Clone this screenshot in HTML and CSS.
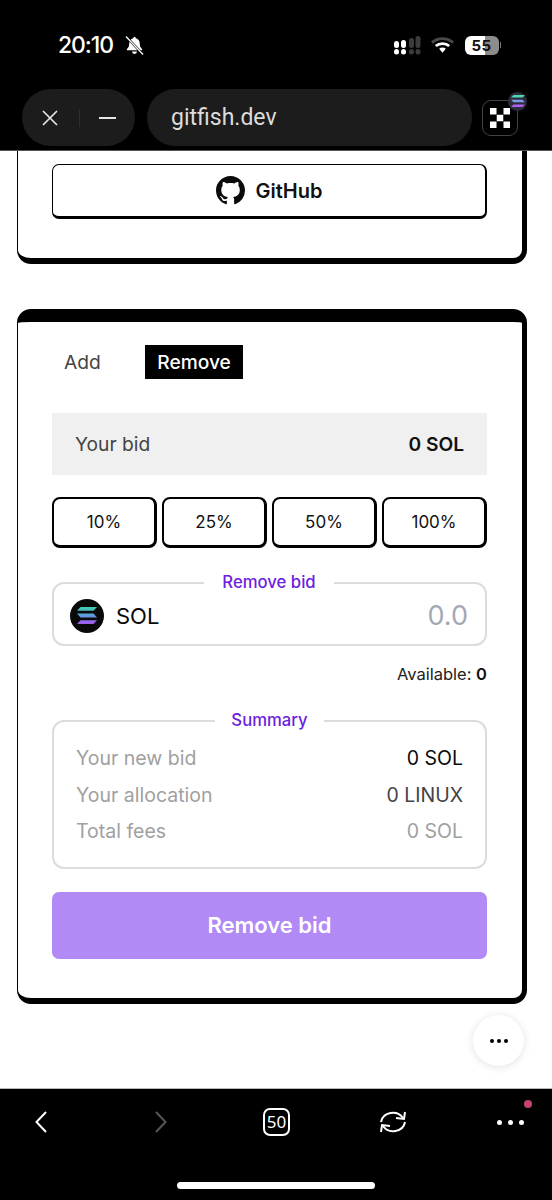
FILE: index.html
```html
<!DOCTYPE html>
<html lang="en">
<head>
<meta charset="utf-8">
<title>gitfish.dev</title>
<link rel="stylesheet" href="styles.css">
</head>
<body>
<div class="screen">
  <header class="chrome">
    <div class="status">
      <div class="status-left">
        <span class="time">20:10</span>
        <svg class="bell" viewBox="0 0 20 20" width="19" height="19"><path fill="#fff" d="M10 1a1.400 1.400 0 0 1 1.400 1.400c2.800.7 4.200 3 4.200 5.800 0 3.100.9 4.200 2.400 5.600v1.200H2v-1.200c1.500-1.400 2.400-2.500 2.400-5.600 0-2.800 1.400-5.100 4.200-5.800A1.400 1.400 0 0 1 10 1z"/><path fill="#fff" d="M7.400 16.400h5.200a2.600 2.600 0 0 1-5.200 0z"/><path stroke="#000" stroke-width="2.600" d="M1 .5l18 19"/><path stroke="#fff" stroke-width="1.300" d="M1 .5l18 19"/></svg>
      </div>
      <div class="status-right">
        <svg class="signal" viewBox="0 0 27 19" width="27" height="19"><g fill="#fff"><rect x="0" y="5" width="5" height="7" rx="2.500"/><rect x="0" y="13" width="5" height="5.500" rx="2.500"/><rect x="7" y="4" width="5" height="8" rx="2.500"/><rect x="7" y="13" width="5" height="5.500" rx="2.500"/></g><g fill="#3c3c3c"><rect x="15" y="2" width="5" height="10" rx="2.500"/><rect x="15" y="13" width="5" height="5.500" rx="2.500"/><rect x="21.500" y="0" width="5" height="12" rx="2.500"/><rect x="21.500" y="13" width="5" height="5.500" rx="2.500"/></g></svg>
        <svg class="wifi" viewBox="0 0 24 18" width="23" height="18"><path fill="none" stroke="#4a4a4a" stroke-width="3" d="M1 6.500C7 1 17 1 23 6.500"/><path fill="none" stroke="#fff" stroke-width="3" d="M5 10c3.700-3.300 10.300-3.300 14 0"/><path fill="#fff" d="M8.500 13c2-1.700 5-1.700 7 0L12 17z"/></svg>
        <span class="battery">55</span><span class="nub"></span>
      </div>
    </div>
    <div class="browser">
      <div class="pill controls">
        <svg viewBox="0 0 16 16" width="16" height="16"><path stroke="#e6e6e6" stroke-width="1.700" d="M1 1l14 14M15 1L1 15"/></svg>
        <span class="divider"></span>
        <span class="minus"></span>
      </div>
      <div class="pill url">gitfish.dev</div>
      <div class="wallet">
        <svg viewBox="0 0 20 20" width="20" height="20"><g fill="#fff"><rect x="0" y="0" width="6.500" height="6.500"/><rect x="13.500" y="0" width="6.500" height="6.500"/><rect x="6.750" y="6.750" width="6.500" height="6.500"/><rect x="0" y="13.500" width="6.500" height="6.500"/><rect x="13.500" y="13.500" width="6.500" height="6.500"/></g></svg>
        <span class="badge">
          <svg viewBox="0 0 14 12" width="14" height="12"><path fill="#4fd6b4" d="M2.500 0H14l-2.500 2.500H0z"/><path fill="#7f9ae8" d="M0 4.700h11.500L14 7.200H2.500z"/><path fill="#b060f0" d="M2.500 9.500H14L11.500 12H0z"/></svg>
        </span>
      </div>
    </div>
  </header>

  <main class="page">
    <section class="card card-top">
      <button class="github">
        <svg viewBox="0 0 16 16" width="29" height="29"><path fill="#0b0b0b" d="M8 0C3.580 0 0 3.580 0 8c0 3.540 2.290 6.530 5.470 7.590.4.070.55-.17.55-.38 0-.19-.01-.82-.01-1.490-2.010.37-2.530-.49-2.690-.94-.09-.23-.48-.94-.82-1.130-.28-.15-.68-.52-.01-.53.63-.01 1.080.58 1.230.82.720 1.210 1.870.87 2.330.66.07-.52.28-.87.51-1.070-1.780-.2-3.640-.89-3.640-3.950 0-.87.31-1.590.82-2.150-.08-.2-.36-1.020.08-2.120 0 0 .67-.21 2.200.82.64-.18 1.320-.27 2-.27.68 0 1.360.09 2 .27 1.530-1.040 2.200-.82 2.200-.82.44 1.100.16 1.920.08 2.120.51.56.82 1.270.82 2.150 0 3.070-1.870 3.750-3.650 3.950.29.25.54.73.54 1.480 0 1.070-.01 1.930-.01 2.200 0 .21.15.46.55.38A8.013 8.013 0 0016 8c0-4.420-3.580-8-8-8z"/></svg>
        <span>GitHub</span>
      </button>
    </section>

    <section class="card card-form">
      <div class="tabs">
        <span class="tab">Add</span>
        <span class="tab active">Remove</span>
      </div>
      <div class="your-bid">
        <span>Your bid</span>
        <strong>0 SOL</strong>
      </div>
      <div class="percents">
        <button class="percent">10%</button>
        <button class="percent">25%</button>
        <button class="percent">50%</button>
        <button class="percent">100%</button>
      </div>
      <fieldset class="group amount">
        <legend class="legend legend-bid">Remove bid</legend>
        <div class="amount-row">
          <span class="sol-logo">
            <svg viewBox="0 0 20 17" width="20" height="17">
              <defs><linearGradient id="solgrad" x1="0" y1="0" x2="0" y2="1"><stop offset="0" stop-color="#3fd0b0"/><stop offset="0.5" stop-color="#5f9be0"/><stop offset="1" stop-color="#a855f0"/></linearGradient></defs>
              <path fill="url(#solgrad)" d="M3.500 0H20l-3.500 3.800H0zM0 6.600h16.500L20 10.400H3.500zM3.500 13.200H20L16.500 17H0z"/>
            </svg>
          </span>
          <span class="sol-name">SOL</span>
          <span class="amount-value">0.0</span>
        </div>
      </fieldset>
      <p class="available">Available: <strong>0</strong></p>
      <fieldset class="group summary">
        <legend class="legend legend-summary">Summary</legend>
        <div class="row"><span>Your new bid</span><span class="v-strong">0 SOL</span></div>
        <div class="row"><span>Your allocation</span><span class="v-mid">0 LINUX</span></div>
        <div class="row"><span>Total fees</span><span>0 SOL</span></div>
      </fieldset>
      <button class="submit">Remove bid</button>
    </section>

    <button class="fab" aria-label="More"><i></i><i></i><i></i></button>
  </main>

  <footer class="toolbar">
    <div class="tools">
      <span class="cell"><svg viewBox="0 0 12 22" width="12" height="22"><path fill="none" stroke="#fff" stroke-width="2" d="M11 1L1.500 11 11 21"/></svg></span>
      <span class="cell cell-forward"><svg viewBox="0 0 12 22" width="12" height="22"><path fill="none" stroke="#555" stroke-width="2" d="M1 1l9.500 10L1 21"/></svg></span>
      <span class="cell cell-count"><span class="tabs-count">50</span></span>
      <span class="cell"><svg viewBox="0 0 28 24" width="28" height="24"><g fill="none" stroke="#fff" stroke-width="2"><path d="M2 12A12 11 0 0 1 24 8"/><path d="M26 2l-1 7-8-1"/><path d="M26 12A12 11 0 0 1 4 16"/><path d="M2 22l1-7 8 1"/></g></svg></span>
      <span class="cell"><span class="more"><i></i><i></i><i></i><b></b></span></span>
    </div>
    <div class="home"></div>
  </footer>
</div>
</body>
</html>
```
FILE: styles.css
```css
* { box-sizing: border-box; }
html, body { margin: 0; padding: 0; background: #fff; }
body { font-family: Inter, "Liberation Sans", sans-serif; color: #000; }
button { font-family: inherit; background: none; cursor: pointer; color: inherit; }

.screen { width: 552px; height: 1200px; display: flex; flex-direction: column; overflow: hidden; }

/* top chrome */
.chrome { height: 151px; flex: none; background: #000; border-bottom: 1px solid #555; padding-top: 33px; }
.status { display: flex; justify-content: space-between; align-items: center; height: 24px; padding: 0 51px 0 58px; }
.status-left { display: flex; align-items: center; gap: 12px; }
.time { font-size: 23px; font-weight: 500; color: #fff; line-height: 24px; letter-spacing: -1.100px; }
.bell { display: block; }
.status-right { display: flex; align-items: center; }
.signal { display: block; margin-right: 10px; }
.wifi { display: block; margin-right: 11px; }
.battery { width: 34px; height: 19px; border-radius: 6px; background: linear-gradient(90deg, #fff 0 58%, #8c8c8c 58% 100%); color: #111; font-size: 15px; font-weight: 700; text-align: center; line-height: 19px; letter-spacing: 0.5px; }
.nub { width: 1.500px; height: 6px; background: #777; margin-left: 1px; }

.browser { display: flex; align-items: center; height: 57px; margin-top: 32px; padding-left: 22px; }
.pill { background: #1c1c1c; height: 57px; border-radius: 29px; display: flex; align-items: center; }
.controls { width: 113px; padding-left: 20px; }
.controls svg { display: block; }
.divider { width: 1px; height: 18px; background: #2e2e2e; margin-left: 21px; }
.minus { width: 17px; height: 2px; background: #e6e6e6; margin-left: 19px; }
.url { width: 325px; margin-left: 12px; padding: 0 0 1px 24px; color: #dcdcdc; font-family: Roboto, sans-serif; font-size: 23px; }
.wallet { position: relative; width: 36px; height: 36px; margin-left: 10px; border: 1px solid #444; border-radius: 9px; display: flex; align-items: center; justify-content: center; }
.wallet > svg { display: block; }
.badge { position: absolute; top: -9px; right: -10px; width: 19px; height: 19px; border-radius: 50%; background: #2c2c3a; display: flex; align-items: center; justify-content: center; }

/* page */
.page { position: relative; flex: 1; background: #fff; padding: 0 25px 0 17px; overflow: hidden; }
.card { background: #fff; border: solid #000; border-width: 0 5px 6px 1px; border-radius: 0 0 14px 14px; padding-left: 34px; padding-right: 35px; }
.card-top { padding-top: 13px; padding-bottom: 39px; }
.card-form { margin-top: 45px; border-top-width: 13px; border-radius: 14px; padding-top: 23px; padding-bottom: 39px; }

.github { width: 100%; height: 55px; border: solid #000; border-width: 1px 2px 3px 1px; border-radius: 7px; display: flex; align-items: center; justify-content: center; gap: 11px; font-size: 20px; font-weight: 600; color: #111; padding: 0; }
.github svg { display: block; }

.tabs { display: flex; gap: 32px; height: 34px; }
.tab { padding: 0 12px; font-size: 19.200px; line-height: 34px; color: #444; }
.active { background: #000; color: #fff; font-weight: 500; padding: 0 12.500px; }

.your-bid { margin-top: 34px; height: 62px; background: #f0f0f0; display: flex; align-items: center; justify-content: space-between; padding: 0 23px; font-size: 19.200px; color: #444; }
.your-bid strong { font-weight: 600; color: #111; }

.percents { margin-top: 22px; display: grid; grid-template-columns: repeat(4, 1fr); gap: 5px; }
.percent { height: 51px; border: solid #000; border-width: 2px 3px 3px 2px; border-radius: 8px; font-size: 17px; color: #111; padding: 0; }

.group { margin: 0; min-width: 0; border: 2px solid #dcdcdc; border-radius: 12px; }
.legend { margin: 0 auto; font-size: 16.700px; line-height: 18px; font-weight: 500; color: #6b21e0; padding-bottom: 2px; }
.legend-bid { padding-left: 18px; padding-right: 18px; }
.legend-summary { padding-left: 16px; padding-right: 16px; }

.amount { margin-top: 25px; padding: 0 17px 2px 16px; }
.amount-row { display: flex; align-items: center; height: 53px; margin-top: -4px; }
.sol-logo { width: 34px; height: 34px; border-radius: 50%; background: #0a0a0a; display: flex; align-items: center; justify-content: center; }
.sol-logo svg { display: block; }
.sol-name { margin-left: 12px; font-size: 22px; color: #0a0a0a; }
.amount-value { margin-left: auto; font-size: 27px; color: #a3a8b3; }

.available { margin: 18px 0 0; font-size: 16.500px; line-height: 20px; text-align: right; color: #222; }
.available strong { font-weight: 600; color: #111; }

.summary { margin-top: 27px; padding: 9px 22px 17px 22px; }
.row { display: flex; justify-content: space-between; align-items: center; height: 36.500px; font-size: 19.500px; color: #a0a0a0; }
.v-strong { color: #0a0a0a; }
.v-mid { color: #444; }

.submit { display: block; width: 100%; height: 67px; margin-top: 23px; border: 0; border-radius: 7px; background: #b18af5; color: #fff; font-size: 22px; font-weight: 600; padding: 0; }

.fab { position: absolute; right: 28px; bottom: 22px; width: 51px; height: 51px; border: 0; border-radius: 50%; background: #fff; box-shadow: 0 1px 8px rgba(0,0,0,0.12); display: flex; align-items: center; justify-content: center; gap: 3px; padding: 0; }
.fab i { width: 4px; height: 4px; border-radius: 50%; background: #000; }

/* bottom toolbar */
.toolbar { height: 112px; flex: none; background: #000; border-top: 1px solid #b8b8b8; }
.tools { display: flex; align-items: center; justify-content: space-between; height: 30px; margin-top: 18px; padding: 0 27px 0 26px; }
.cell { width: 30px; display: flex; align-items: center; justify-content: center; }
.cell-forward { padding-left: 5px; }
.cell-count { padding-left: 2px; }
.tools svg { display: block; }
.tabs-count { flex: none; width: 27px; height: 28px; border: 2px solid #fff; border-radius: 7px; color: #fff; font-size: 17px; text-align: center; line-height: 23px; font-family: "Noto Sans", sans-serif; }
.more { position: relative; display: flex; gap: 6px; }
.more i { width: 5px; height: 5px; border-radius: 50%; background: #fff; }
.more b { position: absolute; top: -20px; right: -8px; width: 8px; height: 8px; border-radius: 50%; background: #c8436e; }
.home { width: 198px; height: 7px; border-radius: 4px; background: #fff; margin: 45px auto 0; }
```
